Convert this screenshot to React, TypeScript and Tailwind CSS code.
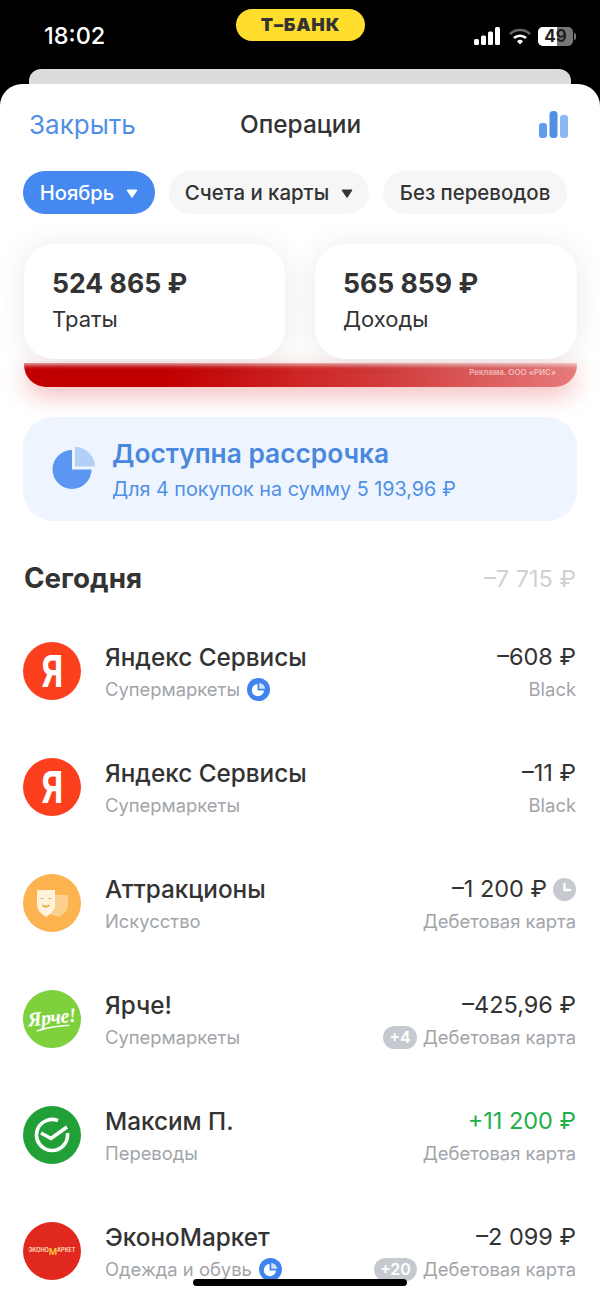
import React from "react";

const Rub = "\u20BD";

const PieBadge = () => (
    <svg width="23" height="23" viewBox="0 0 24 24" className="shrink-0">
        <circle cx="12" cy="12" r="12" fill="#3f83ee" />
        <path d="M11 6.200a6.400 6.400 0 1 0 6.800 6.800H11z" fill="#fff" />
        <path d="M12.800 5.200a6 6 0 0 1 6 6h-6z" fill="#cfe0fb" />
    </svg>
);

const ClockBadge = () => (
    <svg width="23" height="23" viewBox="0 0 24 24" className="shrink-0">
        <circle cx="12" cy="12" r="12" fill="#c6cad0" />
        <path d="M12 6v6.500h6" fill="none" stroke="#fff" strokeWidth="2.400" strokeLinecap="round" strokeLinejoin="round" />
    </svg>
);

const Mask = () => (
    <svg width="31" height="27" viewBox="0 0 31 27">
        <path d="M13 5h18v9c0 6-4 10-9 13l-9-3z" fill="#fcd08f" />
        <path d="M0 0h18v14c0 6-4 10-9 13-5-3-9-7-9-13z" fill="#fff3dc" />
        <rect x="3.500" y="8" width="3" height="1.200" fill="#e9b05c" />
        <rect x="11.500" y="8" width="3" height="1.200" fill="#e9b05c" />
        <path d="M6 15.500q3 2.500 6 0" fill="none" stroke="#f2a93b" strokeWidth="1.800" strokeLinecap="round" />
    </svg>
);

const Sber = () => (
    <svg width="36" height="36" viewBox="0 0 36 36">
        <path d="M24 3.700A15.500 15.500 0 1 0 33.400 16" fill="none" stroke="#fff" strokeWidth="3.600" />
        <path d="M7 16l10 5.500L33 10" fill="none" stroke="#fff" strokeWidth="3.600" />
    </svg>
);

const YandexAvatar = () => (
    <div className="w-[58px] h-[58px] rounded-full bg-[#fc3f1d] flex items-center justify-center">
        <span className="text-white text-[44px] font-bold leading-none scale-x-75">Я</span>
    </div>
);

type Row = {
    title: string;
    sub: string;
    amount: string;
    card: string;
    avatar: React.ReactNode;
    income?: boolean;
    pie?: boolean;
    clock?: boolean;
    extra?: string;
};

const rows: Row[] = [
    { title: "Яндекс Сервисы", sub: "Супермаркеты", amount: `–608 ${Rub}`, card: "Black", avatar: <YandexAvatar />, pie: true },
    { title: "Яндекс Сервисы", sub: "Супермаркеты", amount: `–11 ${Rub}`, card: "Black", avatar: <YandexAvatar /> },
    {
        title: "Аттракционы",
        sub: "Искусство",
        amount: `–1 200 ${Rub}`,
        card: "Дебетовая карта",
        clock: true,
        avatar: (
            <div className="w-[58px] h-[58px] rounded-full bg-[#fdb34f] flex items-center justify-center">
                <Mask />
            </div>
        ),
    },
    {
        title: "Ярче!",
        sub: "Супермаркеты",
        amount: `–425,96 ${Rub}`,
        card: "Дебетовая карта",
        extra: "+4",
        avatar: (
            <div className="w-[58px] h-[58px] rounded-full bg-[#7ed03c] flex flex-col items-center justify-center -rotate-6">
                <span className="text-white text-[20px] font-bold italic leading-[18px] tracking-[-0.5px] font-['Liberation_Serif',serif]">Ярче!</span>
                <svg width="34" height="4" viewBox="0 0 34 4">
                    <path d="M1 3.500Q16 0 33 1" fill="none" stroke="#fff" strokeWidth="1.600" strokeLinecap="round" />
                </svg>
            </div>
        ),
    },
    {
        title: "Максим П.",
        sub: "Переводы",
        amount: `+11 200 ${Rub}`,
        card: "Дебетовая карта",
        income: true,
        avatar: (
            <div className="w-[58px] h-[58px] rounded-full bg-[#21a038] flex items-center justify-center">
                <Sber />
            </div>
        ),
    },
    {
        title: "ЭконоМаркет",
        sub: "Одежда и обувь",
        amount: `–2 099 ${Rub}`,
        card: "Дебетовая карта",
        extra: "+20",
        pie: true,
        avatar: (
            <div className="w-[58px] h-[58px] rounded-full bg-[#e1281e] flex items-center justify-center">
                <span className="text-[#ffe9c9] text-[5.500px] font-semibold leading-none whitespace-nowrap flex items-center">
                    ЭКОНО<span className="text-[#ffc93c] text-[9px]">М</span>АРКЕТ
                </span>
            </div>
        ),
    },
];

const Caret = ({ className }: { className: string }) => (
    <svg width="12" height="9" viewBox="0 0 12 9" className={className}>
        <path d="M1 1h10L6 8.500z" fill="currentColor" stroke="currentColor" strokeLinejoin="round" />
    </svg>
);

const App = () => {
    return (
        <div className="relative w-[600px] h-[1297px] overflow-hidden bg-black flex flex-col font-['Inter',sans-serif] text-[#333]">
            {/* Status bar */}
            <div className="h-[69px] shrink-0 flex justify-between items-start pl-[44px] pr-[24px] pt-[21px]">
                <span className="text-white text-[23.500px] font-medium leading-[30px]">18:02</span>
                <div className="flex items-center h-[30px]">
                    <svg width="27" height="18" viewBox="0 0 27 18">
                        <rect x="0" y="12" width="5" height="6" rx="1.500" fill="#fff" />
                        <rect x="7" y="8.500" width="5" height="9.500" rx="1.500" fill="#fff" />
                        <rect x="14" y="4.500" width="5" height="13.500" rx="1.500" fill="#fff" />
                        <rect x="21" y="0" width="5" height="18" rx="1.500" fill="#fff" />
                    </svg>
                    <svg width="22" height="17" viewBox="0 0 22 17" className="ml-[8px]">
                        <path d="M1 6a14.500 14.500 0 0 1 20 0" fill="none" stroke="#666" strokeWidth="2.600" />
                        <path d="M5 10a9 9 0 0 1 12 0" fill="none" stroke="#fff" strokeWidth="2.600" />
                        <path d="M8 13.200a4.500 4.500 0 0 1 6 0L11 16.500z" fill="#fff" />
                    </svg>
                    <div className="relative w-[35px] h-[19px] ml-[7px] rounded-[5px] bg-[#777] overflow-hidden flex">
                        <div className="w-[19px] bg-white" />
                        <span className="absolute inset-0 text-center text-[17px] leading-[19px] font-bold text-[#222]">49</span>
                    </div>
                    <div className="w-[2px] h-[7px] ml-[1px] rounded-r-full bg-[#777]" />
                </div>
            </div>
            <div className="absolute left-[236px] top-[9px] w-[129px] h-[32px] rounded-full bg-[#ffdd2d] flex items-center justify-center">
                <span className="text-[#333] text-[18px] font-black tracking-[0.8px] leading-none">Т–БАНК</span>
            </div>

            {/* Sheet behind */}
            <div className="h-[15px] shrink-0 mx-[29px] bg-[#dcdcdc] rounded-t-[12px]" />

            {/* Sheet */}
            <div className="flex-1 bg-white rounded-t-[22px] overflow-hidden">
                <div className="h-[87px] pl-[29px] pr-[31px] flex items-center justify-between relative pb-[6px]">
                    <span className="text-[#4f8fe6] text-[26px] leading-none">Закрыть</span>
                    <span className="absolute left-[240px] text-[24.400px] font-medium leading-none">Операции</span>
                    <svg width="31" height="28" viewBox="0 0 31 28" className="-mt-[2px]">
                        <rect x="1" y="13" width="8" height="15" rx="3" fill="#5f9df0" />
                        <rect x="11.500" y="1" width="8" height="27" rx="3.500" fill="#4f8fe6" />
                        <rect x="22" y="5" width="8" height="23" rx="3" fill="#8ab8f5" />
                    </svg>
                </div>

                {/* Chips */}
                <div className="flex gap-[14px] pl-[23px]">
                    <div className="h-[43px] w-[132px] pt-[1px] rounded-full bg-[#4589f0] text-white flex items-center justify-center gap-[12px]">
                        <span className="text-[20.200px] font-medium">Ноябрь</span>
                        <Caret className="text-white" />
                    </div>
                    <div className="h-[43px] w-[200px] pt-[1px] rounded-full bg-[#f6f6f7] flex items-center justify-center gap-[12px]">
                        <span className="text-[20.400px] font-medium">Счета и карты</span>
                        <Caret className="text-[#333]" />
                    </div>
                    <div className="h-[43px] w-[184px] pt-[1px] rounded-full bg-[#f6f6f7] flex items-center justify-center">
                        <span className="text-[20.400px] font-medium">Без переводов</span>
                    </div>
                </div>

                {/* Summary */}
                <div className="flex gap-[30px] pl-[24px] mt-[30px]">
                    <div className="w-[261px] h-[115px] rounded-[30px] bg-white shadow-[0_2px_32px_rgba(0,0,0,0.09)] pl-[28px] pt-[22px]">
                        <div className="text-[26.600px] font-bold leading-[34px]">524 865 {Rub}</div>
                        <div className="text-[22px] leading-[30px] mt-[4px]">Траты</div>
                    </div>
                    <div className="w-[262px] h-[115px] rounded-[30px] bg-white shadow-[0_2px_32px_rgba(0,0,0,0.09)] pl-[28px] pt-[22px]">
                        <div className="text-[26.600px] font-bold leading-[34px]">565 859 {Rub}</div>
                        <div className="text-[22px] leading-[30px] mt-[4px]">Доходы</div>
                    </div>
                </div>

                {/* Ad strip */}
                <div className="ml-[24px] mr-[23px] mt-[4px] h-[24px] rounded-b-[22px] bg-[linear-gradient(90deg,#c40000_0%,#c40000_25%,#d43c3c_65%,#e87c7c_100%)] shadow-[inset_0_4px_4px_-2px_rgba(255,255,255,0.75),0_8px_24px_rgba(220,30,30,0.32)] flex justify-end pr-[21px] pt-[3px]">
                    <span className="text-white/55 text-[8px] font-semibold leading-[12px]">Реклама. ООО «РИС»</span>
                </div>

                {/* Installment */}
                <div className="mt-[30px] mx-[23px] h-[104px] rounded-[30px] bg-[#eff5fe] flex items-center pl-[29px] gap-[17px]">
                    <svg width="43" height="44" viewBox="0 0 43 44" className="shrink-0">
                        <path d="M20 3A19.500 19.500 0 1 0 39.500 22.500H20z" fill="#5b96f2" />
                        <path d="M23 0a20 20 0 0 1 20 19.500H23z" fill="#b4cff7" />
                    </svg>
                    <div>
                        <div className="text-[#4a88dd] text-[26.300px] font-semibold leading-[34px]">Доступна рассрочка</div>
                        <div className="text-[#4f8fe6] text-[19.750px] leading-[26px] mt-[5px]">Для 4 покупок на сумму 5 193,96 {Rub}</div>
                    </div>
                </div>

                {/* Today */}
                <div className="flex justify-between items-center px-[24px] mt-[40px] h-[36px]">
                    <span className="text-[27.800px] font-bold leading-none">Сегодня</span>
                    <span className="text-[23.500px] text-[#cfd1d4] leading-none">–7 715 {Rub}</span>
                </div>

                {/* Operations */}
                <div className="flex flex-col gap-[58px] mt-[45px] pl-[23px] pr-[24px]">
                    {rows.map((row, i) => (
                        <div key={i} className="flex h-[58px]">
                            {row.avatar}
                            <div className="ml-[24px] flex-1 -mt-[1px]">
                                <div className="flex justify-between items-center h-[32px]">
                                    <span className="text-[24.300px] font-medium leading-none">{row.title}</span>
                                    <span className="flex items-center gap-[6px]">
                                        <span className={`text-[23.500px] leading-none ${row.income ? "text-[#1fb04b]" : "text-[#333]"}`}>{row.amount}</span>
                                        {row.clock && <ClockBadge />}
                                    </span>
                                </div>
                                <div className="flex justify-between items-center h-[32px]">
                                    <span className="flex items-center gap-[7px]">
                                        <span className="text-[18.400px] text-[#a1a5aa] leading-none">{row.sub}</span>
                                        {row.pie && <PieBadge />}
                                    </span>
                                    <span className="flex items-center gap-[6px]">
                                        {row.extra && (
                                            <span className="h-[23px] px-[6px] rounded-full bg-[#c6cad0] text-white text-[16px] font-semibold leading-[23px]">{row.extra}</span>
                                        )}
                                        <span className="text-[18.400px] text-[#a1a5aa] leading-none">{row.card}</span>
                                    </span>
                                </div>
                            </div>
                        </div>
                    ))}
                </div>
            </div>

            {/* Home indicator */}
            <div className="absolute left-[193px] top-[1279px] w-[214px] h-[7px] rounded-full bg-black" />
        </div>
    );
};

export default App;
